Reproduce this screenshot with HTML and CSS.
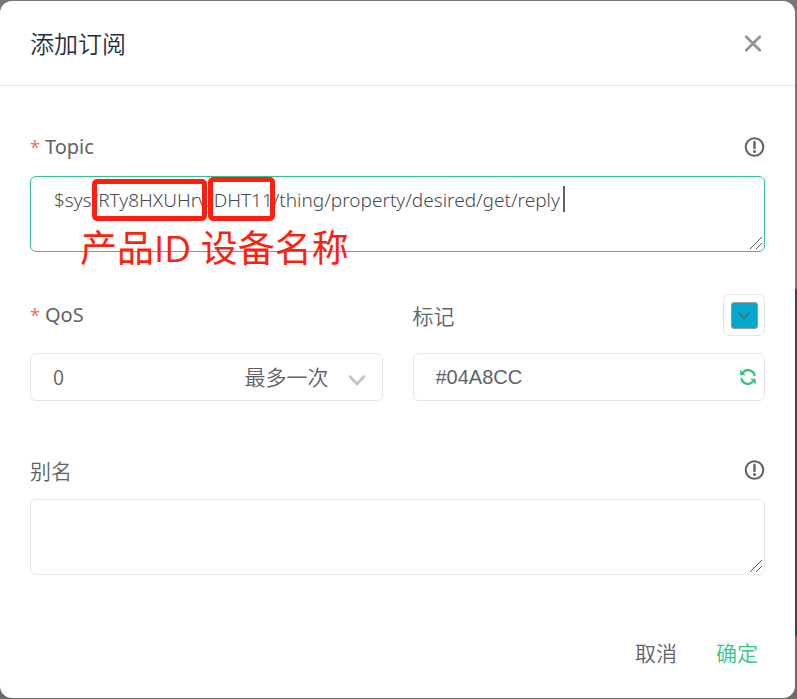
FILE: index.html
```html
<!DOCTYPE html>
<html lang="zh-CN">
<head>
<meta charset="utf-8">
<meta name="viewport" content="width=device-width, initial-scale=1">
<title>添加订阅</title>
<link rel="stylesheet" href="styles.css">
</head>
<body>
<div class="backdrop">
  <form class="dialog" role="dialog" aria-labelledby="dialog-title">
    <header class="dialog-header">
      <h1 class="dialog-title" id="dialog-title">添加订阅</h1>
      <button class="icon-button" type="button" aria-label="关闭">
        <svg width="24" height="24" viewBox="0 0 24 24" fill="none" stroke="#909399" stroke-width="2.7" stroke-linecap="round"><path d="M5.2 5.7L18.8 19.3M18.8 5.7L5.2 19.3"/></svg>
      </button>
    </header>

    <div class="dialog-body">
      <div class="field">
        <div class="field-head">
          <label class="label required" for="topic">Topic</label>
          <button class="icon-button" type="button" aria-label="Topic 说明">
            <svg width="22" height="22" viewBox="0 0 22 22" fill="none" stroke="#606266" stroke-width="2"><circle cx="11.5" cy="11" r="8.8"/><path d="M11.5 6V12" stroke-linecap="round" stroke-width="2.4"/><circle cx="11.5" cy="15.4" r="1.5" fill="#606266" stroke="none"/></svg>
          </button>
        </div>
        <div class="textarea-box">
          <textarea class="textarea active" id="topic" rows="2" spellcheck="false">$sys/RTy8HXUHrv/DHT11/thing/property/desired/get/reply</textarea>
          <svg class="grip" width="12" height="12" viewBox="0 0 12 12" stroke="#555" stroke-width="1"><path d="M0 12L12 0M6 12L12 6"/></svg>
          <span class="caret"></span>
          <span class="mark mark-product"></span>
          <span class="mark mark-device"></span>
          <span class="note">产品ID 设备名称</span>
        </div>
      </div>

      <div class="field-row">
        <div class="field">
          <div class="field-head">
            <label class="label required" for="qos">QoS</label>
          </div>
          <div class="control">
            <select class="input select" id="qos">
              <option>0</option>
              <option>1</option>
              <option>2</option>
            </select>
            <span class="select-extra">
              <span>最多一次</span>
              <svg width="20" height="20" viewBox="0 0 20 20" fill="none" stroke="#c0c4cc" stroke-width="2.6" stroke-linecap="round" stroke-linejoin="round"><path d="M3 10.5L10 18L17 10.5"/></svg>
            </span>
          </div>
        </div>
        <div class="field">
          <div class="field-head">
            <label class="label" for="color">标记</label>
            <button class="swatch" type="button" aria-label="选择颜色">
              <span class="swatch-fill">
                <svg width="14" height="14" viewBox="0 0 14 14" fill="none" stroke="#606266" stroke-width="1.4" stroke-linecap="round" stroke-linejoin="round"><path d="M2 5L7 10L12 5"/></svg>
              </span>
            </button>
          </div>
          <div class="control">
            <input class="input color-input" id="color" type="text" value="#04A8CC">
            <button class="icon-button refresh" type="button" aria-label="刷新颜色">
              <svg width="18" height="18" viewBox="0 0 18 18" fill="none" stroke="#34c388" stroke-width="2.4"><path d="M4 4.4A6.6 6.6 0 0 1 15.6 7.8M14 13.6A6.6 6.6 0 0 1 2.4 10.2"/><path d="M1.2 1.6V7.2H6.8ZM16.8 16.4V10.8H11.2Z" fill="#34c388" stroke="none"/></svg>
            </button>
          </div>
        </div>
      </div>

      <div class="field">
        <div class="field-head">
          <label class="label" for="alias">别名</label>
          <button class="icon-button" type="button" aria-label="别名说明">
            <svg width="22" height="22" viewBox="0 0 22 22" fill="none" stroke="#606266" stroke-width="2"><circle cx="11.5" cy="11" r="8.8"/><path d="M11.5 6V12" stroke-linecap="round" stroke-width="2.4"/><circle cx="11.5" cy="15.4" r="1.5" fill="#606266" stroke="none"/></svg>
          </button>
        </div>
        <div class="textarea-box">
          <textarea class="textarea" id="alias" rows="2"></textarea>
          <svg class="grip" width="12" height="12" viewBox="0 0 12 12" stroke="#555" stroke-width="1"><path d="M0 12L12 0M6 12L12 6"/></svg>
        </div>
      </div>
    </div>

    <footer class="dialog-footer">
      <button class="text-button" type="button">取消</button>
      <button class="text-button primary" type="submit">确定</button>
    </footer>
  </form>
</div>
</body>
</html>
```
FILE: styles.css
```css
* {
  box-sizing: border-box;
}

body {
  margin: 0;
  color: #606266;
  font-family: "Noto Sans CJK SC", sans-serif;
  font-size: 20px;
  font-weight: 350;
  line-height: 28px;
}

button,
input,
select,
textarea {
  margin: 0;
  color: inherit;
  font: inherit;
}

button {
  padding: 0;
  border: 0;
  background: none;
}

svg {
  display: block;
}

.backdrop {
  min-height: 100vh;
  padding: 1px 2px 1px 0;
  background: linear-gradient(#777 289px, #165b45 289px, #165b45 636px, #6b6b6b 636px);
}

.dialog {
  border-radius: 12px;
  background: #fff;
}

.dialog-header {
  display: flex;
  align-items: center;
  justify-content: space-between;
  height: 85px;
  padding: 0 30px;
  border-bottom: 1px solid #e4e4f0;
}

.dialog-title {
  margin: 0;
  color: #262e3e;
  font-size: 24px;
  font-weight: 350;
}

.dialog-body {
  display: flex;
  flex-direction: column;
  gap: 42px;
  padding: 40px 30px 0;
}

.field-head {
  display: flex;
  align-items: center;
  justify-content: space-between;
  height: 42px;
  margin-bottom: 8px;
}

.label,
.select-extra,
.text-button {
  font-size: 21px;
  line-height: 26px;
}

.label.required {
  font-family: "Noto Sans", sans-serif;
  font-size: 20px;
  font-weight: 400;
}

.required::before {
  content: "*";
  margin-right: 5px;
  color: #f56c6c;
  font-size: 18px;
}

.textarea-box {
  position: relative;
}

.textarea {
  display: block;
  width: 100%;
  height: 76px;
  padding: 9px 23px;
  border: 1px solid #e4e4f0;
  border-radius: 6px;
  outline: 0;
  background: #fff;
  color: #484a4e;
  font-family: "Noto Sans", "Noto Sans CJK SC", sans-serif;
  font-size: 19px;
  font-weight: 300;
  resize: none;
}

.active {
  border-color: #34c388;
}

.grip,
.caret,
.mark,
.note {
  position: absolute;
  pointer-events: none;
}

.grip {
  right: 3px;
  bottom: 3px;
}

.caret {
  top: 10px;
  left: 533px;
  width: 2px;
  height: 26px;
  background: #606266;
}

.mark {
  border: 5px solid #ff1e10;
  border-radius: 5px;
}

.mark-product {
  top: 3px;
  left: 62px;
  width: 115px;
  height: 42px;
}

.mark-device {
  top: 1px;
  left: 178px;
  width: 67px;
  height: 44px;
}

.note {
  top: 46px;
  left: 50px;
  color: #ff1e10;
  font-family: "Open Sans", "Noto Sans CJK SC", sans-serif;
  font-size: 37px;
  font-weight: 400;
  line-height: 52px;
  white-space: nowrap;
}

.field-row {
  display: grid;
  grid-template-columns: 1fr 1fr;
  gap: 30px;
  margin-bottom: 6px;
}

.field-row .field-head {
  margin-bottom: 17px;
}

.control {
  position: relative;
}

.input {
  display: block;
  width: 100%;
  height: 48px;
  padding: 0 22px;
  border: 1px solid #e4e4f0;
  border-radius: 6px;
  outline: 0;
  background: #fff;
}

.select {
  appearance: none;
}

.select-extra {
  position: absolute;
  top: 0;
  right: 16px;
  display: flex;
  align-items: center;
  gap: 18px;
  height: 46px;
  pointer-events: none;
}

.color-input {
  font-family: "Liberation Sans", sans-serif;
}

.refresh {
  position: absolute;
  top: 15px;
  right: 8px;
}

.swatch {
  display: grid;
  place-items: center;
  width: 42px;
  height: 42px;
  border: 1px solid #e6e6e6;
  border-radius: 6px;
}

.swatch-fill {
  display: grid;
  place-items: center;
  width: 27px;
  height: 27px;
  border: 1px solid #999;
  border-radius: 3px;
  background: #04a8cc;
}

.dialog-footer {
  display: flex;
  justify-content: flex-end;
  gap: 39px;
  padding: 56px 37px 25px;
}

.text-button {
  height: 42px;
}

.primary {
  color: #34c388;
}
```
